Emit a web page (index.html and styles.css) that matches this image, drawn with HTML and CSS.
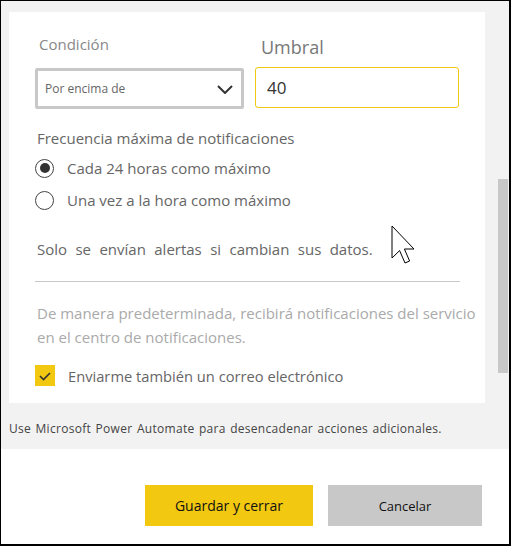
FILE: index.html
```html
<!DOCTYPE html>
<html lang="es">
<head>
<meta charset="utf-8">
<link rel="stylesheet" href="styles.css">
</head>
<body>
<div class="frame">
  <div class="top">
    <div class="main">
      <div class="panel">
        <div class="row">
          <div class="col col-a">
            <div class="label">Condición</div>
            <div class="select">
              <span>Por encima de</span>
              <svg class="chev" width="16" height="9" viewBox="0 0 16 9"><path d="M1 1 L8 8 L15 1" fill="none" stroke="#333" stroke-width="2"/></svg>
            </div>
          </div>
          <div class="col col-b">
            <div class="label big">Umbral</div>
            <div class="input">40</div>
          </div>
        </div>
        <div class="freq">Frecuencia máxima de notificaciones</div>
        <div class="radio"><span class="dot on"></span><span>Cada 24 horas como máximo</span></div>
        <div class="radio"><span class="dot"></span><span>Una vez a la hora como máximo</span></div>
        <div class="note">Solo se envían alertas si cambian sus datos.</div>
        <div class="sep"></div>
        <div class="muted">De manera predeterminada, recibirá notificaciones del servicio en el centro de notificaciones.</div>
        <div class="check"><span class="box"><svg width="20" height="21" viewBox="0 0 20 21"><path d="M5 11 L8.5 14.5 L15 8" fill="none" stroke="#333" stroke-width="1.6"/></svg></span><span>Enviarme también un correo electrónico</span></div>
      </div>
      <div class="foot">Use Microsoft Power Automate para desencadenar acciones adicionales.</div>
    </div>
    <div class="track"><div class="thumb"></div></div>
  </div>
  <div class="actions">
    <button class="btn primary">Guardar y cerrar</button>
    <button class="btn secondary">Cancelar</button>
  </div>
  <svg class="cursor" width="24" height="40" viewBox="0 0 12 20"><path d="M0.5 0.5 L0.5 16.5 L4.3 12.8 L7 19 L9.3 18 L6.7 12 L11.5 12 Z" fill="#fff" stroke="#000" stroke-width="0.5"/></svg>
</div>
</body>
</html>
```

FILE: styles.css
```css
* { box-sizing: border-box; }
html, body { margin: 0; padding: 0; background: #fff; }
body { font-family: "Open Sans", "Liberation Sans", sans-serif; }
.frame {
  position: relative;
  width: 511px;
  height: 546px;
  border-top: 1px solid #000;
  border-left: 1px solid #000;
  border-right: 2px solid #000;
  border-bottom: 2px solid #000;
  background: #fff;
  overflow: hidden;
}
.top {
  height: 448px;
  background: #f2f2f2;
  display: flex;
}
.main {
  padding: 11px 0 0 8px;
  width: 484px;
}
.panel {
  width: 476px;
  height: 391px;
  background: #fff;
  padding: 0 0 0 26px;
  overflow: hidden;
}
.row { display: flex; gap: 11px; }
.col-a { width: 209px; }
.col-b { width: 204px; }
.label {
  font-size: 15px;
  color: #888;
  padding: 23px 0 0 4px;
  height: 56px;
  line-height: 18px;
}
.label.big { font-size: 18px; color: #777; padding: 24px 0 0 6px; height: 55px; line-height: 22px; }
.select {
  height: 41px;
  border: 3px solid #c8c8c8;
  border-radius: 2px;
  display: flex;
  align-items: center;
  justify-content: space-between;
  padding: 0 8px 0 7px;
  font-size: 12px;
  color: #666;
}
.chev { margin-top: 1px; }
.input {
  height: 41px;
  border: 1px solid #f2c811;
  border-radius: 3px;
  padding: 0 0 0 11px;
  font-size: 17px;
  color: #333;
  line-height: 40px;
}
.freq {
  font-size: 15px;
  color: #666;
  padding: 20px 0 0 2px;
  line-height: 18px;
  height: 43px;
}
.radio {
  display: flex;
  align-items: center;
  height: 32px;
  font-size: 15px;
  color: #666;
  gap: 13px;
}
.dot {
  width: 19px;
  height: 19px;
  border: 1px solid #444;
  border-radius: 50%;
  display: flex;
  align-items: center;
  justify-content: center;
}
.dot.on::after {
  content: "";
  width: 10px;
  height: 10px;
  background: #333;
  border-radius: 50%;
}
.note {
  font-size: 15px;
  color: #666;
  padding: 24px 0 0 2px;
  line-height: 18px;
  word-spacing: 4.5px;
}
.sep {
  width: 425px;
  height: 1px;
  background: #c8c8c8;
  margin-top: 23px;
}
.muted {
  font-size: 15px;
  color: #aaa;
  width: 446px;
  line-height: 24px;
  padding: 19px 0 0 2px;
}
.check {
  display: flex;
  align-items: center;
  gap: 13px;
  margin-top: 16px;
  font-size: 14.7px;
  color: #666;
}
.box { width: 20px; height: 21px; background: #f2c811; display: block; }
.box svg { display: block; }
.foot {
  font-size: 12px;
  color: #444;
  padding-top: 17px;
  letter-spacing: 0.3px;
  word-spacing: 1px;
}
.track { width: 24px; padding: 178px 0 0 13px; }
.thumb { width: 10px; height: 194px; background: #c8c8c8; }
.actions {
  display: flex;
  gap: 15px;
  padding: 36px 0 0 144px;
}
.btn {
  border: 0;
  height: 41px;
  font-family: inherit;
  font-size: 14px;
  color: #111;
  padding: 0;
}
.primary { width: 168px; background: #f2c811; }
.secondary { width: 154px; background: #c8c8c8; font-size: 13px; }
.cursor { position: absolute; left: 390px; top: 224px; }
```
